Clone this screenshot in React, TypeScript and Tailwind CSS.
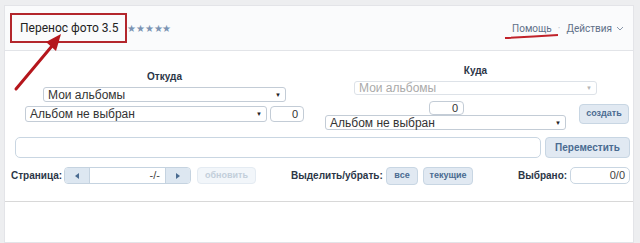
import React from "react";

const sel = "flex items-center justify-between bg-white border border-[#c3ccd6] rounded-[3px] px-[4px] text-[12px] font-normal leading-none text-[#333] whitespace-nowrap";
const inp = "bg-white border border-[#c3ccd6] rounded-[4px] text-[11px] leading-none text-[#333] flex items-center justify-end px-[5px]";
const btn = "flex items-center justify-center bg-[#e1e9f2] border border-[#c8d6e3] rounded-[4px] text-[#4a6b91] font-bold leading-none shrink-0 whitespace-nowrap";

function Arrow({ gray }: { gray?: boolean }) {
  return <span className={"text-[6px] " + (gray ? "text-[#b5b5b5]" : "text-[#222]")}>▼</span>;
}

export default function App() {
  return (
    <div className="w-[640px] h-[243px] bg-[#edeef0] overflow-hidden relative" style={{ fontFamily: '"Liberation Sans", Arial, sans-serif' }}>
      <div className="absolute left-0 right-0 top-[5px] bottom-0 pl-[4px] pr-[6px]">
        <div className="bg-white border border-[#e3e4e8] h-full flex flex-col">
          {/* header */}
          <div className="h-[45px] bg-[#fafbfc] border-b border-[#e2e4e8] flex items-center justify-between pl-[15px] pr-[9px] shrink-0" style={{ fontFamily: 'Roboto, "Liberation Sans", sans-serif' }}>
            <div className="flex items-center">
              <span className="text-[12px] text-[#222]">Перенос фото 3.5</span>
              <span className="ml-[9px] text-[10px] tracking-[-0.3px] text-[#7b93b3]">★★★★★</span>
            </div>
            <div className="flex items-center text-[10px] text-[#5f7088]">
              <span>Помощь</span>
              <span className="mx-[6px] text-[#b8c0ca]">·</span>
              <span>Действия</span>
              <svg width="8" height="5" viewBox="0 0 8 5" className="ml-[4px]"><path d="M1 1l3 3 3-3" fill="none" stroke="#8a98aa" strokeWidth="1" /></svg>
            </div>
          </div>

          {/* top section */}
          <div className="h-[86px] flex items-start shrink-0">
            <div className="mt-[20px] ml-[20px] w-[279px] flex flex-col items-center">
              <div className="text-[10px] font-bold text-[#2b3647] leading-[12px]">Откуда</div>
              <div className={sel + " mt-[4px] w-[243px] h-[15px]"}>
                <span>Мои альбомы</span>
                <Arrow />
              </div>
              <div className="mt-[4px] flex w-full">
                <div className={sel + " w-[242px] h-[16px]"}>
                  <span>Альбом не выбран</span>
                  <Arrow />
                </div>
                <div className={inp + " ml-[3px] w-[34px] h-[16px]"}>0</div>
              </div>
            </div>
            <div className="mt-[14px] ml-[21px] flex flex-col">
              <div className="ml-[29px] w-[243px] text-center text-[10px] font-bold text-[#2b3647] leading-[12px]">Куда</div>
              <div className={sel + " mt-[4px] ml-[29px] w-[243px] h-[14px] !text-[#aaa] !border-[#dde2e8]"}>
                <span>Мои альбомы</span>
                <Arrow gray />
              </div>
              <div className="flex items-center">
                <div className="flex flex-col">
                  <div className={inp + " mt-[6px] ml-[104px] w-[35px] h-[14px]"}>0</div>
                  <div className={sel + " w-[241px] h-[15px]"}>
                    <span>Альбом не выбран</span>
                    <Arrow />
                  </div>
                </div>
                <div className={btn + " ml-[13px] mt-[2px] w-[50px] h-[20px] text-[9px]"}>создать</div>
              </div>
            </div>
          </div>

          {/* path row */}
          <div className="flex items-center h-[21px] shrink-0">
            <div className="ml-[10px] w-[526px] h-[21px] bg-white border border-[#c9d6e2] rounded-[5px]" />
            <div className={btn + " ml-[4px] w-[85px] h-[21px] text-[10px]"}>Переместить</div>
          </div>

          {/* bottom row */}
          <div className="flex items-center h-[17px] mt-[9px] shrink-0 text-[10px] font-bold text-[#2b3647] whitespace-nowrap">
            <span className="ml-[6px] w-[52px] shrink-0">Страница:</span>
            <div className="ml-[1px] flex h-[17px] w-[127px] shrink-0 border border-[#c5d3e0] rounded-[4px] overflow-hidden">
              <div className="w-[24px] bg-[#dde7f1] flex items-center justify-center">
                <svg width="4" height="6" viewBox="0 0 4 6"><path d="M4 0L0 3l4 3z" fill="#4a6b91" /></svg>
              </div>
              <div className="flex-1 bg-white border-x border-[#c5d3e0] flex items-center justify-end pr-[5px] text-[11px] font-normal text-[#444]">-/-</div>
              <div className="w-[24px] bg-[#dde7f1] flex items-center justify-center">
                <svg width="4" height="6" viewBox="0 0 4 6"><path d="M0 0l4 3-4 3z" fill="#4a6b91" /></svg>
              </div>
            </div>
            <div className="ml-[6px] w-[59px] h-[17px] shrink-0 flex items-center justify-center bg-[#f2f6fa] border border-[#e4ebf2] rounded-[4px] text-[9px] text-[#c3cfdb]">обновить</div>
            <span className="ml-[35px] w-[90px] shrink-0">Выделить/убрать:</span>
            <div className={btn + " ml-[5px] w-[32px] h-[18px] text-[9px]"}>все</div>
            <div className={btn + " ml-[5px] w-[50px] h-[18px] text-[9px]"}>текущие</div>
            <span className="ml-[45px] w-[48px] shrink-0">Выбрано:</span>
            <div className="ml-[4px] w-[60px] h-[17px] shrink-0 bg-white border border-[#c9d6e2] rounded-[5px] flex items-center justify-end pr-[4px] text-[11px] font-normal text-[#444]">0/0</div>
          </div>

          <div className="mt-[17px] border-t border-[#d8d8d8]" />
        </div>
      </div>

      {/* annotations */}
      <div className="absolute left-[10px] top-[13px] w-[117px] h-[30px] border-2 border-[#b3262c]" />
      <svg className="absolute left-0 top-0" width="640" height="243" viewBox="0 0 640 243">
        <line x1="16" y1="89" x2="52" y2="46" stroke="#b5161c" strokeWidth="3" strokeLinecap="round" />
        <polygon points="61,34 46,42 56,51" fill="#b5161c" />
        <path d="M505 38 Q530 37 558 35" fill="none" stroke="#c0222a" strokeWidth="2" />
      </svg>
    </div>
  );
}
